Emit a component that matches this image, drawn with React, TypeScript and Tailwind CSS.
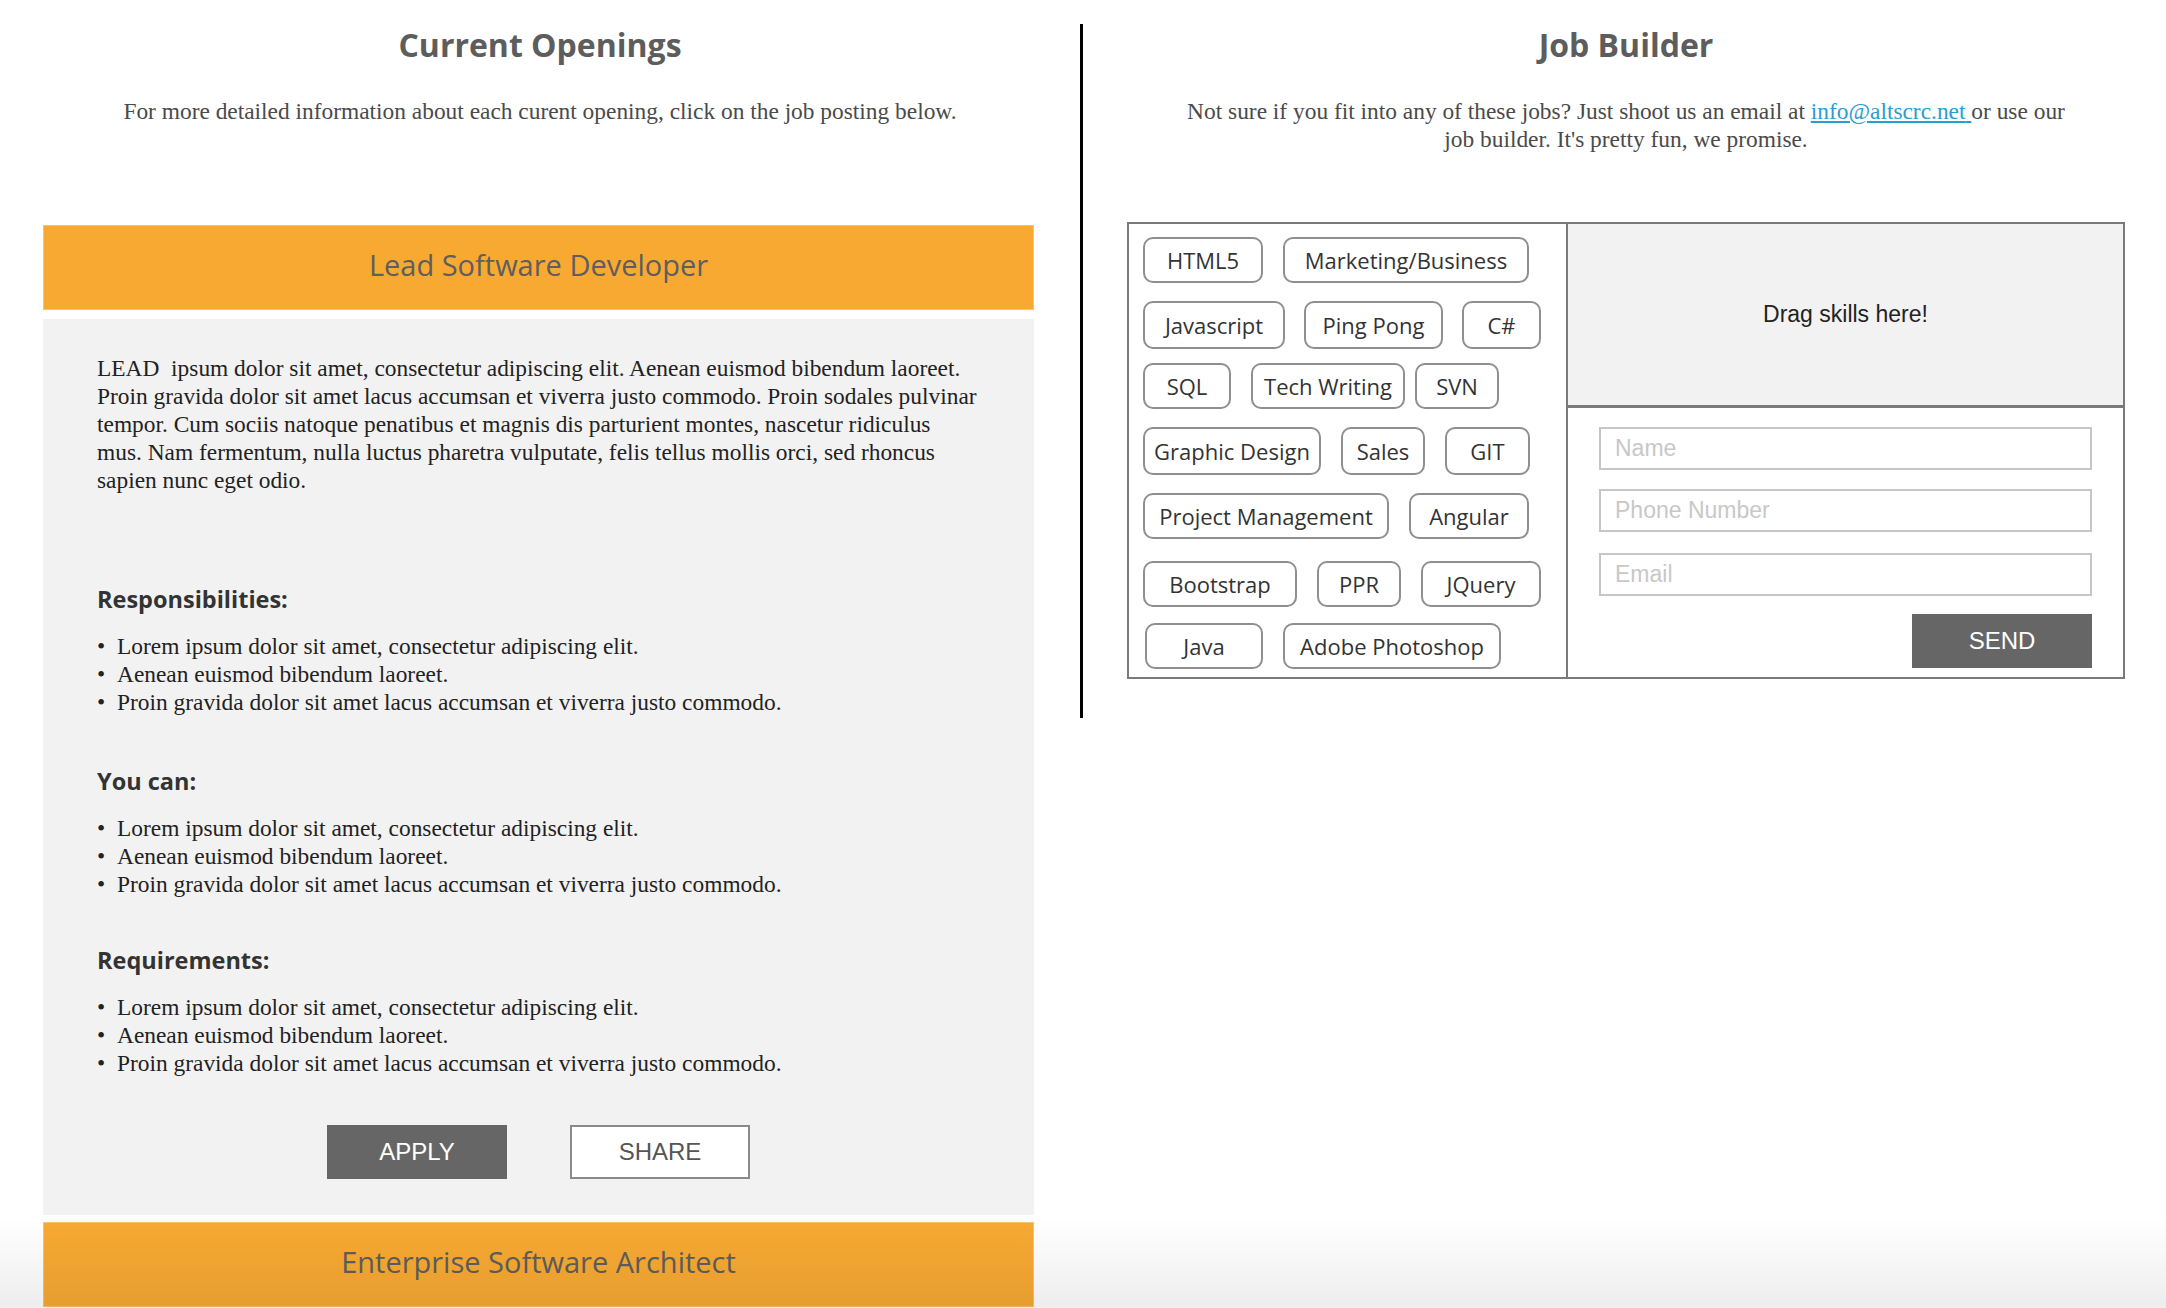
const openSans = "font-['Open_Sans',sans-serif]";
const serif = "font-['Liberation_Serif',serif]";
const sans = "font-['Liberation_Sans',Arial,sans-serif]";

const lorem = [
  "Lorem ipsum dolor sit amet, consectetur adipiscing elit.",
  "Aenean euismod bibendum laoreet.",
  "Proin gravida dolor sit amet lacus accumsan et viverra justo commodo.",
];

// rows of draggable skills, widths/offsets taken off the mockup
const skillRows = [
  { mt: "mt-[13px]", h: "h-[46px]", gap: "gap-[20px]", pl: "pl-[14px]", items: [["HTML5", "w-[120px]"], ["Marketing/Business", "w-[246px]"]] },
  { mt: "mt-[18px]", h: "h-[48px]", gap: "gap-[19px]", pl: "pl-[14px]", items: [["Javascript", "w-[142px]"], ["Ping Pong", "w-[139px]"], ["C#", "w-[79px]"]] },
  { mt: "mt-[14px]", h: "h-[46px]", gap: "gap-[20px]", pl: "pl-[14px]", items: [["SQL", "w-[88px]"], ["Tech Writing", "w-[154px]"], ["SVN", "w-[84px] -ml-[10px]"]] },
  { mt: "mt-[18px]", h: "h-[48px]", gap: "gap-[20px]", pl: "pl-[14px]", items: [["Graphic Design", "w-[178px]"], ["Sales", "w-[84px]"], ["GIT", "w-[85px]"]] },
  { mt: "mt-[18px]", h: "h-[46px]", gap: "gap-[20px]", pl: "pl-[14px]", items: [["Project Management", "w-[246px]"], ["Angular", "w-[120px]"]] },
  { mt: "mt-[22px]", h: "h-[46px]", gap: "gap-[20px]", pl: "pl-[14px]", items: [["Bootstrap", "w-[154px]"], ["PPR", "w-[84px]"], ["JQuery", "w-[120px]"]] },
  { mt: "mt-[16px]", h: "h-[46px]", gap: "gap-[20px]", pl: "pl-[16px]", items: [["Java", "w-[118px]"], ["Adobe Photoshop", "w-[218px]"]] },
];

function Bullets() {
  return (
    <ul className={`${serif} mt-[19px] text-[23.4px] leading-[28px] text-[#222]`}>
      {lorem.map((t) => (
        <li key={t} className="flex">
          <span className="w-[20px] shrink-0">•</span>
          <span>{t}</span>
        </li>
      ))}
    </ul>
  );
}

function SectionTitle({ children, className = "" }: { children: string; className?: string }) {
  return (
    <h3 className={`${openSans} ${className} text-[23.5px] leading-[28px] font-bold text-[#333]`}>{children}</h3>
  );
}

function JobBar({ title, className = "" }: { title: string; className?: string }) {
  return (
    <div
      className={`${className} flex h-[85px] items-center justify-center border border-[#fac36a] bg-[#f8a932] pb-[5px]`}
    >
      <span className={`${openSans} text-[29px] text-[#5e5e5e]`}>{title}</span>
    </div>
  );
}

export default function App() {
  return (
    <div className="relative min-h-[1308px] w-full overflow-hidden bg-white">
      <div className="flex">
        {/* Current openings */}
        <div className="w-[1080px] shrink-0">
          <h1 className={`${openSans} mt-[25px] text-center text-[32px] leading-[40px] font-bold text-[#5d5d5d]`}>
            Current Openings
          </h1>
          <p className={`${serif} mt-[32px] text-center text-[23.4px] leading-[28px] text-[#4a4a4a]`}>
            For more detailed information about each curent opening, click on the job posting below.
          </p>

          <div className="ml-[43px] mr-[46px]">
            <JobBar title="Lead Software Developer" className="mt-[100px]" />

            <div className="mt-[9px] bg-[#f2f2f2] pt-[35px] pb-[36px] pl-[54px] pr-[30px]">
              <p className={`${serif} text-[23.4px] leading-[28px] text-[#222]`}>
                LEAD{"\u00a0"} ipsum dolor sit amet, consectetur adipiscing elit. Aenean euismod bibendum laoreet.
                <br />
                Proin gravida dolor sit amet lacus accumsan et viverra justo commodo. Proin sodales pulvinar
                <br />
                tempor. Cum sociis natoque penatibus et magnis dis parturient montes, nascetur ridiculus
                <br />
                mus. Nam fermentum, nulla luctus pharetra vulputate, felis tellus mollis orci, sed rhoncus
                <br />
                sapien nunc eget odio.
              </p>

              <SectionTitle className="mt-[91px]">Responsibilities:</SectionTitle>
              <Bullets />

              <SectionTitle className="mt-[51px]">You can:</SectionTitle>
              <Bullets />

              <SectionTitle className="mt-[48px]">Requirements:</SectionTitle>
              <Bullets />

              <div className="mt-[48px] flex justify-center gap-[63px] pr-[24px]">
                <button className={`${sans} h-[54px] w-[180px] bg-[#666] text-[24px] text-white`}>APPLY</button>
                <button className={`${sans} h-[54px] w-[180px] border-2 border-[#8a8a8a] bg-white text-[24px] text-[#555]`}>
                  SHARE
                </button>
              </div>
            </div>

            <JobBar title="Enterprise Software Architect" className="mt-[7px]" />
          </div>
        </div>

        <div className="mt-[24px] h-[694px] w-[3px] shrink-0 bg-black" />

        {/* Job builder */}
        <div className="flex-1 pl-[44px] pr-[41px]">
          <h1 className={`${openSans} mt-[25px] text-center text-[32px] leading-[40px] font-bold text-[#5d5d5d]`}>
            Job Builder
          </h1>
          <p className={`${serif} mx-auto mt-[32px] max-w-[900px] text-center text-[23.4px] leading-[28px] text-[#4a4a4a]`}>
            Not sure if you fit into any of these jobs? Just shoot us an email at{" "}
            <a href="#" className="text-[#2a9dd4] underline">
              info@altscrc.net{" "}
            </a>
            or use our job builder. It's pretty fun, we promise.
          </p>

          <div className="mt-[69px] flex border-2 border-[#7a7a7a]">
            <div className="w-[437px] shrink-0 pb-[8px]">
              {skillRows.map((row, i) => (
                <div key={i} className={`flex ${row.mt} ${row.gap} ${row.pl}`}>
                  {row.items.map(([label, w]) => (
                    <div
                      key={label}
                      className={`${w} ${row.h} ${openSans} flex cursor-move items-center justify-center rounded-[10px] border-2 border-[#8f8f8f] bg-white text-[22px] text-[#333]`}
                    >
                      {label}
                    </div>
                  ))}
                </div>
              ))}
            </div>

            <div className="flex flex-1 flex-col border-l-2 border-[#7a7a7a]">
              <div
                className={`${sans} flex h-[184px] items-center justify-center border-b-[3px] border-[#7a7a7a] bg-[#f2f2f2] text-[23px] text-[#222]`}
              >
                Drag skills here!
              </div>
              <form className="flex flex-col px-[31px] pt-[19px] pb-[9px]" onSubmit={(e) => e.preventDefault()}>
                <input
                  placeholder="Name"
                  className={`${sans} h-[43px] border-2 border-[#c6c6c6] px-[14px] text-[23px] placeholder:text-[#c8c8c8]`}
                />
                <input
                  placeholder="Phone Number"
                  className={`${sans} mt-[19px] h-[43px] border-2 border-[#c6c6c6] px-[14px] text-[23px] placeholder:text-[#c8c8c8]`}
                />
                <input
                  placeholder="Email"
                  className={`${sans} mt-[21px] h-[43px] border-2 border-[#c6c6c6] px-[14px] text-[23px] placeholder:text-[#c8c8c8]`}
                />
                <button
                  type="submit"
                  className={`${sans} mt-[18px] h-[54px] w-[180px] self-end bg-[#666] text-[24px] text-white`}
                >
                  SEND
                </button>
              </form>
            </div>
          </div>
        </div>
      </div>

      {/* bottom fade of the screenshot */}
      <div className="pointer-events-none absolute inset-x-0 bottom-0 h-[90px] bg-[linear-gradient(to_bottom,rgba(0,0,0,0),rgba(0,0,0,0.07))]" />
    </div>
  );
}
